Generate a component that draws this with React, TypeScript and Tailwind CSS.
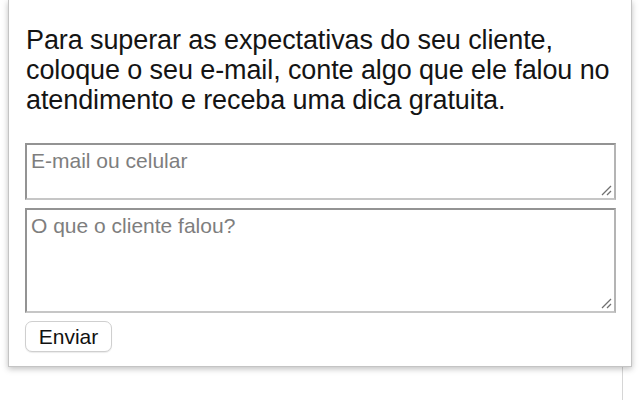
import React from "react";

function Grip() {
  return (
    <svg width="11" height="11" viewBox="0 0 11 11" className="absolute right-[2px] bottom-[2px] pointer-events-none">
      <line x1="1" y1="10" x2="10" y2="1" stroke="#707070" strokeWidth="1.2" />
      <line x1="6" y1="10" x2="10" y2="6" stroke="#707070" strokeWidth="1.2" />
    </svg>
  );
}

function Field({ placeholder, height }: { placeholder: string; height: string }) {
  return (
    <div className={`relative ${height} border-2 border-[#939393] border-r-[#b4b4b4] border-b-[#c6c6c6] bg-white`}>
      <div className="pl-[4px] pt-[4px] text-[21px] leading-[24px] text-[#7e7e7e]">{placeholder}</div>
      <Grip />
    </div>
  );
}

export default function App() {
  return (
    <div
      className="relative w-[640px] h-[400px] bg-white overflow-hidden"
      style={{ fontFamily: '"Liberation Sans", Arial, sans-serif' }}
    >
      <div className="absolute left-[622px] top-[360px] w-px h-[40px] bg-[#d6d6d6]" />
      <div className="relative ml-[8px] w-[624px] h-[367px] bg-white border border-t-0 border-[#c4c4c4] shadow-[0_2px_6px_rgba(0,0,0,0.25)] pl-[16px] pr-[15px] pt-[25px] flex flex-col">
        <p className="text-[27px] leading-[30px] text-[#141414] pl-[1px] tracking-[-0.1px]">
          Para superar as expectativas do seu cliente, coloque o seu e-mail, conte algo que ele falou no atendimento e receba uma dica gratuita.
        </p>
        <div className="mt-[28px] flex flex-col gap-[8px]">
          <Field placeholder="E-mail ou celular" height="h-[57px]" />
          <Field placeholder="O que o cliente falou?" height="h-[105px]" />
        </div>
        <div className="mt-[8px] flex">
          <button className="w-[87px] h-[31px] rounded-[7px] border border-[#cfcfcf] bg-white text-[21px] leading-[24px] text-[#111] shadow-[0_1px_1px_rgba(0,0,0,0.08)]">
            Enviar
          </button>
        </div>
      </div>
    </div>
  );
}
